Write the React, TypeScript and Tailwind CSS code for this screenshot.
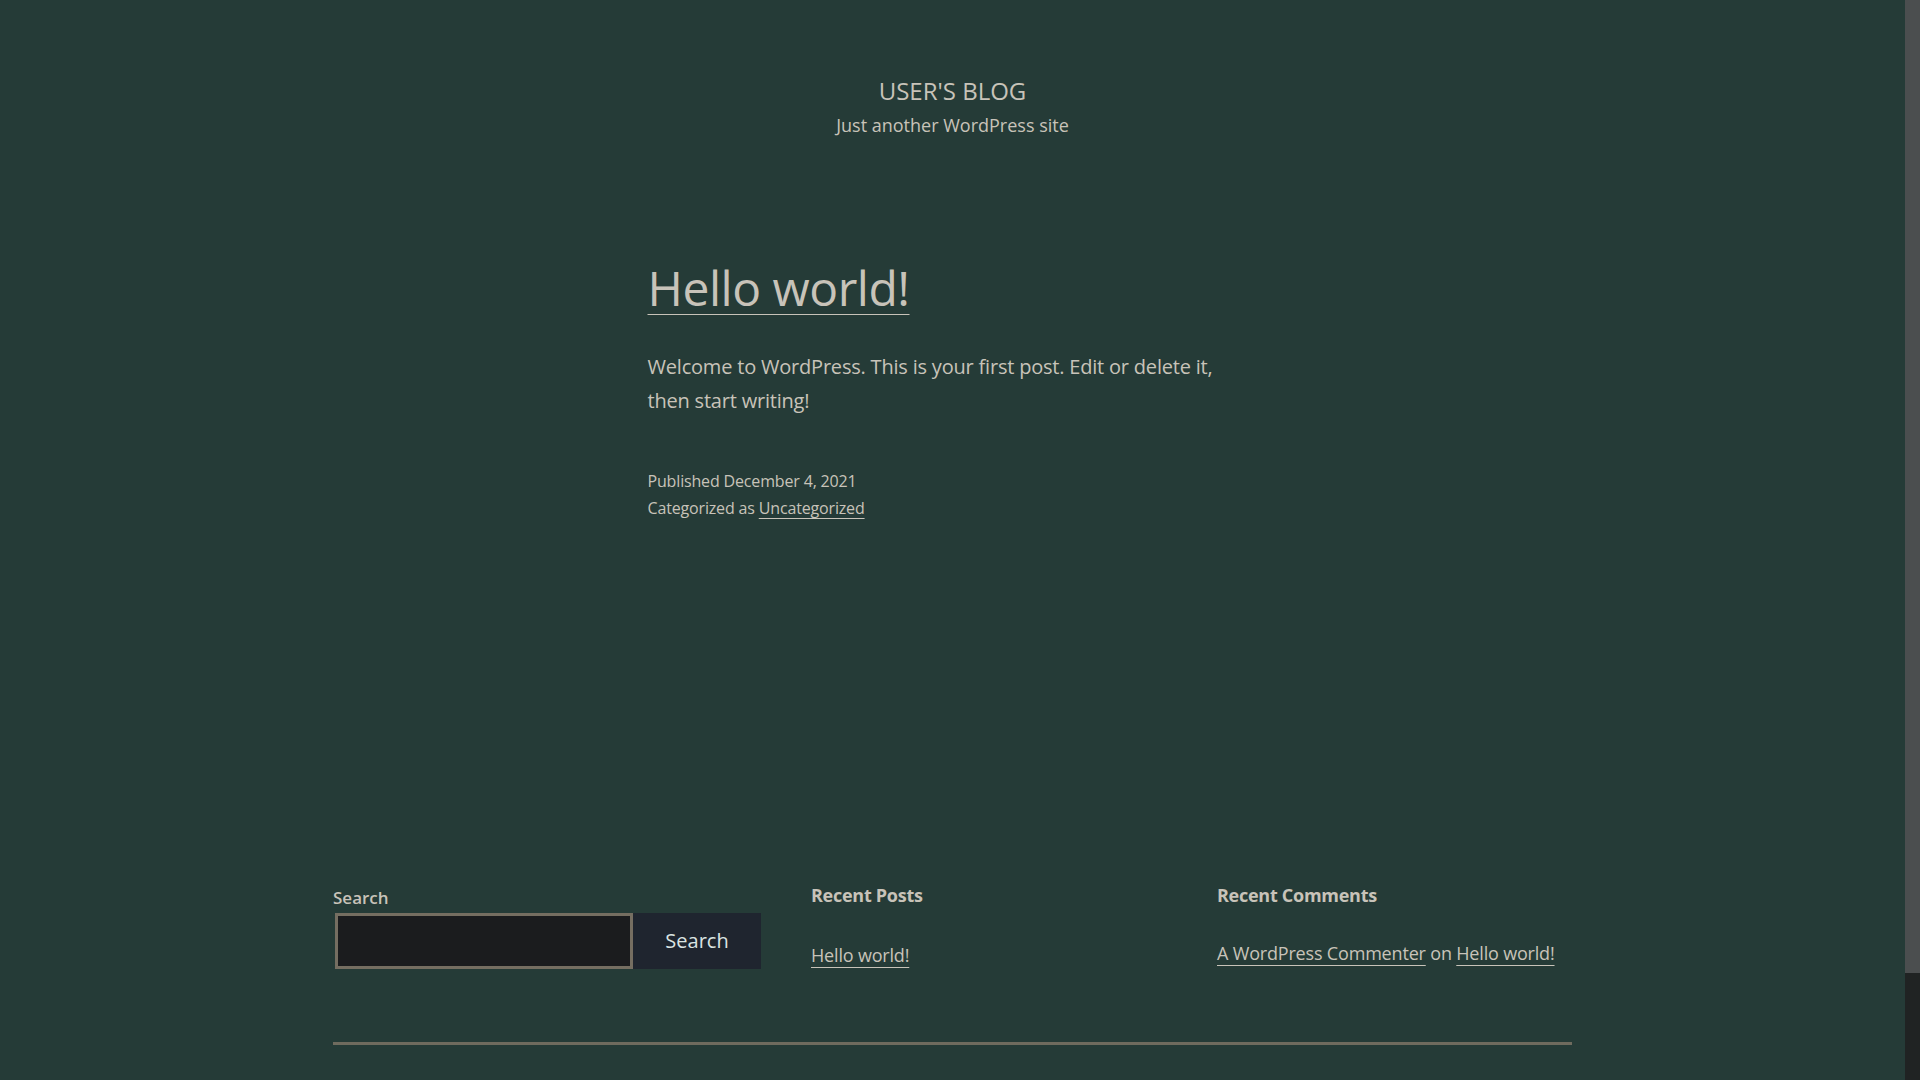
const FONT = "font-['Open_Sans',sans-serif]"

function SiteHeader() {
  return (
    <header className="flex flex-col items-center pt-[76px]">
      <p className="text-[24px] leading-[30px] uppercase">User's Blog</p>
      <p className="mt-[7px] text-[18px] leading-[24px]">Just another WordPress site</p>
    </header>
  )
}

function Post() {
  return (
    <article className="mx-auto w-[610px] pt-[122px]">
      <h2 className="text-[48px] leading-[58px] tracking-[-0.01em]">
        <a href="#" className="underline decoration-1 underline-offset-[8px]">
          Hello world!
        </a>
      </h2>
      <p className="mt-[33px] text-[20px] leading-[34px] tracking-[-0.01em]">
        Welcome to WordPress. This is your first post. Edit or delete it, then start writing!
      </p>
      <footer className="mt-[50px] text-[16px] leading-[27px] tracking-[-0.01em]">
        <p>Published December 4, 2021</p>
        <p>
          Categorized as{" "}
          <a href="#" className="underline decoration-1 underline-offset-[4px]">
            Uncategorized
          </a>
        </p>
      </footer>
    </article>
  )
}

function Widgets() {
  return (
    <aside className="mx-auto mt-auto w-[1239px]">
      <div className="grid grid-cols-[428px_356px_1fr] gap-x-[50px]">
        <div className="pt-[6px]">
          <label className="block text-[17px] font-semibold leading-[22px]">Search</label>
          <div className="mt-[4px] flex pl-[2px]">
            <input
              type="search"
              className="h-[56px] w-[298px] border-[3px] border-[#756e61] bg-[#1b1c1e] px-3 text-[20px] outline-none"
            />
            <button className="h-[56px] w-[128px] bg-[#1f252f] text-[20px] font-medium text-[#dbe4e2]">
              Search
            </button>
          </div>
        </div>
        <div className="pt-[2px]">
          <h2 className="text-[18px] font-bold leading-[24px] tracking-[-0.015em]">Recent Posts</h2>
          <ul className="mt-[35px] text-[18px] leading-[26px] tracking-[-0.01em]">
            <li>
              <a href="#" className="underline decoration-1 underline-offset-[5px]">
                Hello world!
              </a>
            </li>
          </ul>
        </div>
        <div className="pt-[2px]">
          <h2 className="text-[18px] font-bold leading-[24px] tracking-[-0.015em]">Recent Comments</h2>
          <ul className="mt-[33px] whitespace-nowrap text-[18px] leading-[26px] tracking-[-0.01em]">
            <li>
              <a href="#" className="underline decoration-1 underline-offset-[5px]">
                A WordPress Commenter
              </a>{" "}
              on{" "}
              <a href="#" className="underline decoration-1 underline-offset-[5px]">
                Hello world!
              </a>
            </li>
          </ul>
        </div>
      </div>
      <hr className="mt-[73px] h-[3px] border-0 bg-[#6f6b5e]" />
    </aside>
  )
}

export default function App() {
  return (
    <div className={`flex h-screen w-full overflow-hidden bg-[#253b37] text-[#c8c3b9] ${FONT}`}>
      <main className="flex flex-1 flex-col pb-[35px]">
        <SiteHeader />
        <Post />
        <Widgets />
      </main>
      <div className="flex w-[15px] flex-col bg-[#202323]">
        <div className="h-[973px] bg-[#4b4e4f]" />
      </div>
    </div>
  )
}
